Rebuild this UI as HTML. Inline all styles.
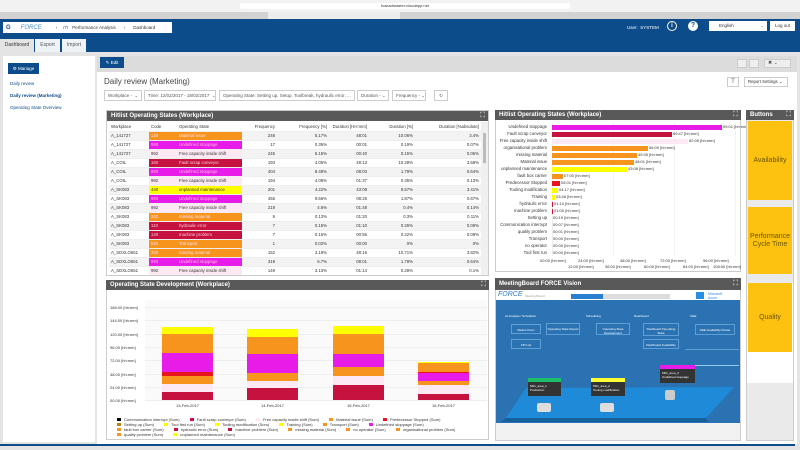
<!DOCTYPE html>
<html><head><meta charset="utf-8">
<style>
*{margin:0;padding:0;box-sizing:border-box}
body{width:800px;height:450px;overflow:hidden;background:#e4e4e4;font-family:"Liberation Sans",sans-serif;position:relative;font-size:5px;color:#333}
.a{position:absolute}
.ph{position:absolute;background:#595959;color:#fff;font-weight:bold;font-size:6px;line-height:10px;padding-left:4px}
.ph i{position:absolute;right:3px;top:0;font-style:normal;color:#bbb;font-size:7px}
.sel{position:absolute;top:90px;height:11px;border:1px solid #ccc;background:#fff;font-size:4.5px;line-height:9px;padding-left:3px;color:#555;white-space:nowrap;overflow:hidden}
table{border-collapse:collapse;font-size:4.3px}
td{height:9px;padding:0 2px;white-space:nowrap;border-bottom:1px solid #eee}
tr:nth-child(even) td{background:#f3f3f3}
.r{text-align:right}
.lab{position:absolute;font-size:4.3px;text-align:right;width:80px;left:467px}
.bar{position:absolute;height:5px;left:552px}
.bl{position:absolute;font-size:4px;color:#333;white-space:nowrap}
.yb{position:absolute;background:#fcc20f;color:#6b5200;font-size:7px;text-align:center;left:748px;width:44px;display:flex;align-items:center;justify-content:center;line-height:8px}
.lg{font-size:4px}
.mb{position:absolute;border:1px solid #5f9fd6;color:#fff;font-size:3px;text-align:center;padding-top:3px}
</style></head><body>
<div class="a" style="left:0;top:0;width:800px;height:12px;background:#f2f2f2"></div>
<div class="a" style="left:240px;top:3px;width:330px;height:6px;background:#fff;border-radius:2px;font-size:4px;text-align:center;color:#333;line-height:6px">fcacadmaster.cloudapp.net</div>
<div class="a" style="left:0;top:12px;width:800px;height:7px;background:#d2d2d2"></div>
<div class="a" style="left:268px;top:12px;width:132px;height:7px;background:#ececec"></div>
<div class="a" style="left:0;top:19px;width:800px;height:33px;background:#0d4c8b"></div>
<div class="a" style="left:3px;top:22px;width:169px;height:11px;background:#fff;font-size:4.5px;line-height:11px;color:#333;white-space:nowrap">
<span style="color:#0d4c8b;font-weight:bold;margin-left:3px;font-size:6px">G</span><span style="color:#4a8fd0;margin-left:10px;font-size:6px;font-style:italic">FORCE</span><span style="margin-left:14px">›</span><span style="margin-left:6px;color:#0d4c8b">/7\</span><span style="margin-left:4px">Performance Analysis</span><span style="margin-left:8px">›</span><span style="margin-left:8px">Dashboard</span></div>
<div class="a" style="left:0;top:39px;width:34px;height:13px;background:#e4e4e4;font-size:5px;line-height:13px;text-align:center">Dashboard</div>
<div class="a" style="left:35px;top:39px;width:25px;height:13px;background:#eef3f8;font-size:5px;line-height:13px;text-align:center;color:#555">Export</div>
<div class="a" style="left:62px;top:39px;width:24px;height:13px;background:#eef3f8;font-size:5px;line-height:13px;text-align:center;color:#555">Import</div>
<div class="a" style="left:627px;top:25px;color:#fff;font-size:4.5px">User: &nbsp;SYSTEM</div>
<div class="a" style="left:667px;top:21px;width:10px;height:10px;border:1px solid #fff;border-radius:50%;color:#fff;font-size:6px;text-align:center;line-height:8px;font-weight:bold">i</div>
<div class="a" style="left:688px;top:21px;width:10px;height:10px;background:#fff;border-radius:50%;color:#0d4c8b;font-size:7px;text-align:center;line-height:10px;font-weight:bold">?</div>
<div class="a" style="left:709px;top:21px;width:58px;height:10px;background:#fff;font-size:4.5px;line-height:10px;padding-left:10px">English<span style="float:right;margin-right:3px;color:#888">⌄</span></div>
<div class="a" style="left:770px;top:21px;width:25px;height:10px;background:#fff;font-size:4.5px;line-height:10px;text-align:center">Log out</div>
<div class="a" style="left:3px;top:56px;width:92px;height:386px;background:#fff"></div>
<div class="a" style="left:8px;top:63px;width:31px;height:11px;background:#0d4c8b;color:#fff;font-size:4.5px;line-height:11px;text-align:center">⚙ Manage</div>
<div class="a" style="left:10px;top:81px;font-size:4.5px;color:#0d4c8b">Daily review</div>
<div class="a" style="left:10px;top:93px;font-size:4.5px;color:#0d4c8b;font-weight:bold">Daily review (Marketing)</div>
<div class="a" style="left:10px;top:105px;font-size:4.5px;color:#0d4c8b">Operating State Overview</div>
<div class="a" style="left:97px;top:56px;width:700px;height:16px;background:#dcdcdc"></div>
<div class="a" style="left:100px;top:57px;width:24px;height:11px;background:#0d4c8b;color:#fff;font-size:4.5px;line-height:11px;text-align:center">✎ Edit</div>
<div class="a" style="left:737px;top:59px;width:10px;height:9px;background:#eee;border:1px solid #ccc"></div>
<div class="a" style="left:749px;top:59px;width:10px;height:9px;background:#eee;border:1px solid #ccc"></div>
<div class="a" style="left:764px;top:59px;width:27px;height:9px;background:#eee;border:1px solid #ccc;font-size:5px;line-height:7px;padding-left:3px;color:#555">✖ ⌄</div>
<div class="a" style="left:97px;top:72px;width:700px;height:372px;background:#fff"></div>
<div class="a" style="left:104px;top:77px;font-size:8px;color:#444">Daily review (Marketing)</div>
<div class="sel" style="left:104px;width:38px">Workplace - &nbsp;⌄</div>
<div class="sel" style="left:144px;width:72px">Time: 12/02/2017 - 18/02/2017 &nbsp;⌄</div>
<div class="sel" style="left:219px;width:136px">Operating State: Setting up, Setup, Toolbreak, hydraulic error, ... &nbsp;⌄</div>
<div class="sel" style="left:357px;width:32px">Duration - ⌄</div>
<div class="sel" style="left:392px;width:34px">Frequency - ⌄</div>
<div class="sel" style="left:434px;width:14px;text-align:center;padding:0">↻</div>
<div class="a" style="left:727px;top:77px;width:12px;height:10px;border:1px solid #ccc;font-size:6px;text-align:center;line-height:8px;color:#666">T</div>
<div class="a" style="left:744px;top:77px;width:44px;height:10px;border:1px solid #ccc;font-size:4.3px;line-height:8px;padding-left:3px;white-space:nowrap">Report Settings ⌄</div>

<div class="a" style="left:106px;top:110px;width:383px;height:166px;border:1px solid #ccc;background:#fff;overflow:hidden">
<div class="ph" style="left:0;top:0;width:381px">Hitlist Operating States (Workplace)<i>⛶</i></div>
<table class="a" style="left:2px;top:11px;width:372px">
<tr><td style="width:40px">Workplace</td><td style="width:28px">Code</td><td style="width:65px">Operating State</td><td class="r" style="width:35px">Frequency</td><td class="r" style="width:52px">Frequency [%]</td><td class="r" style="width:40px">Duration [HH:mm]</td><td class="r" style="width:46px">Duration [%]</td><td class="r">Duration [%absolute]</td></tr>
<tr><td>A_141727</td><td style="background:#f7941d;color:#fde">120</td><td style="background:#f7941d;color:#fde">Material issue</td><td class="r">246</td><td class="r">5.17%</td><td class="r">48:01</td><td class="r">10.06%</td><td class="r">3.4%</td></tr>
<tr><td>A_141727</td><td style="background:#e81ce8;color:#fbd">990</td><td style="background:#e81ce8;color:#fbd">Undefined stoppage</td><td class="r">17</td><td class="r">0.36%</td><td class="r">00:01</td><td class="r">0.19%</td><td class="r">0.07%</td></tr>
<tr><td>A_141727</td><td style="background:#fde9f3">992</td><td style="background:#fde9f3">Free capacity inside shift</td><td class="r">245</td><td class="r">5.15%</td><td class="r">00:40</td><td class="r">0.15%</td><td class="r">0.05%</td></tr>
<tr><td>A_COIL</td><td style="background:#c5123e;color:#fcd">160</td><td style="background:#c5123e;color:#fcd">Fault scrap conveyor</td><td class="r">193</td><td class="r">4.05%</td><td class="r">48:13</td><td class="r">10.28%</td><td class="r">3.68%</td></tr>
<tr><td>A_COIL</td><td style="background:#e81ce8;color:#fbd">990</td><td style="background:#e81ce8;color:#fbd">Undefined stoppage</td><td class="r">404</td><td class="r">8.49%</td><td class="r">08:03</td><td class="r">1.79%</td><td class="r">0.64%</td></tr>
<tr><td>A_COIL</td><td style="background:#fde9f3">992</td><td style="background:#fde9f3">Free capacity inside shift</td><td class="r">194</td><td class="r">4.08%</td><td class="r">01:37</td><td class="r">0.36%</td><td class="r">0.13%</td></tr>
<tr><td>A_SK083</td><td style="background:#ffff00">440</td><td style="background:#ffff00">unplanned maintenance</td><td class="r">201</td><td class="r">4.22%</td><td class="r">43:08</td><td class="r">9.57%</td><td class="r">3.41%</td></tr>
<tr><td>A_SK083</td><td style="background:#e81ce8;color:#fbd">990</td><td style="background:#e81ce8;color:#fbd">Undefined stoppage</td><td class="r">455</td><td class="r">9.56%</td><td class="r">08:25</td><td class="r">1.87%</td><td class="r">0.67%</td></tr>
<tr><td>A_SK083</td><td style="background:#fde9f3">992</td><td style="background:#fde9f3">Free capacity inside shift</td><td class="r">219</td><td class="r">4.6%</td><td class="r">01:48</td><td class="r">0.4%</td><td class="r">0.14%</td></tr>
<tr><td>A_SK083</td><td style="background:#f7941d;color:#fde">330</td><td style="background:#f7941d;color:#fde">missing material</td><td class="r">6</td><td class="r">0.13%</td><td class="r">01:20</td><td class="r">0.3%</td><td class="r">0.11%</td></tr>
<tr><td>A_SK083</td><td style="background:#c5123e;color:#fcd">110</td><td style="background:#c5123e;color:#fcd">hydraulic error</td><td class="r">7</td><td class="r">0.15%</td><td class="r">01:10</td><td class="r">0.26%</td><td class="r">0.09%</td></tr>
<tr><td>A_SK083</td><td style="background:#c5123e;color:#fcd">140</td><td style="background:#c5123e;color:#fcd">machine problem</td><td class="r">7</td><td class="r">0.15%</td><td class="r">00:56</td><td class="r">0.22%</td><td class="r">0.08%</td></tr>
<tr><td>A_SK083</td><td style="background:#f7941d;color:#fde">520</td><td style="background:#f7941d;color:#fde">Transport</td><td class="r">1</td><td class="r">0.02%</td><td class="r">00:00</td><td class="r">0%</td><td class="r">0%</td></tr>
<tr><td>A_SDXLO651</td><td style="background:#f7941d;color:#fde">330</td><td style="background:#f7941d;color:#fde">missing material</td><td class="r">152</td><td class="r">3.19%</td><td class="r">48:16</td><td class="r">10.71%</td><td class="r">3.82%</td></tr>
<tr><td>A_SDXLO651</td><td style="background:#e81ce8;color:#fbd">990</td><td style="background:#e81ce8;color:#fbd">Undefined stoppage</td><td class="r">319</td><td class="r">6.7%</td><td class="r">08:01</td><td class="r">1.78%</td><td class="r">0.64%</td></tr>
<tr><td>A_SDXLO651</td><td style="background:#fde9f3">992</td><td style="background:#fde9f3">Free capacity inside shift</td><td class="r">149</td><td class="r">3.13%</td><td class="r">01:14</td><td class="r">0.28%</td><td class="r">0.1%</td></tr>
<tr><td>A_ROCK</td><td style="background:#f7941d">120</td><td style="background:#f7941d">Material issue</td><td class="r">220</td><td class="r">4.62%</td><td class="r">48:00</td><td class="r">10.41%</td><td class="r">3.4%</td></tr>
</table>
<div class="a" style="left:374px;top:11px;width:7px;height:155px;background:#f0f0f0"></div>
<div class="a" style="left:376px;top:22px;width:3px;height:30px;background:#bbb"></div>
</div>

<div class="a" style="left:495px;top:110px;width:246px;height:162px;border:1px solid #ccc;background:#fff"></div>
<div class="ph" style="left:495px;top:110px;width:246px">Hitlist Operating States (Workplace)<i>⛶</i></div>
<div class="a" style="left:552px;top:122px;width:1px;height:134px;background:#eee"></div>
<div class="a" style="left:613px;top:122px;width:1px;height:134px;background:#f3f3f3"></div>
<div class="a" style="left:674px;top:122px;width:1px;height:134px;background:#f3f3f3"></div>
<div class="a" style="left:735px;top:122px;width:1px;height:134px;background:#f3f3f3"></div>
<div id="hb"></div>
<div class="bl" style="left:540px;top:258px">00:00 [hh:mm]</div>
<div class="bl" style="left:568px;top:264px">12:00 [hh:mm]</div>
<div class="bl" style="left:578px;top:258px">24:00 [hh:mm]</div>
<div class="bl" style="left:605px;top:264px">36:00 [hh:mm]</div>
<div class="bl" style="left:620px;top:258px">48:00 [hh:mm]</div>
<div class="bl" style="left:644px;top:264px">60:00 [hh:mm]</div>
<div class="bl" style="left:660px;top:258px">72:00 [hh:mm]</div>
<div class="bl" style="left:683px;top:264px">84:00 [hh:mm]</div>
<div class="bl" style="left:703px;top:258px">96:00 [hh:mm]</div>
<div class="bl" style="left:713px;top:264px">108:00 [hh:mm]</div>

<div class="a" style="left:746px;top:110px;width:48px;height:331px;border:1px solid #ccc;background:#eaeaea"></div>
<div class="a" style="left:747px;top:283px;width:46px;height:100px;background:#fff"></div>
<div class="ph" style="left:746px;top:110px;width:48px">Buttons<i>⛶</i></div>
<div class="yb" style="top:121px;height:79px">Availability</div>
<div class="yb" style="top:207px;height:67px">Performance<br>Cycle Time</div>
<div class="yb" style="top:283px;height:69px">Quality</div>

<div class="a" style="left:106px;top:280px;width:383px;height:160px;border:1px solid #ccc;background:#fff"></div>
<div class="ph" style="left:106px;top:280px;width:383px">Operating State Development (Workplace)<i>⛶</i></div>
<div class="a" style="left:145px;top:300px;width:342px;height:100px;background:#fafafa"></div>
<div id="ax"></div>
<div id="bars"></div>
<div class="bl" style="left:176px;top:403px">13-Feb-2017</div>
<div class="bl" style="left:261px;top:403px">14-Feb-2017</div>
<div class="bl" style="left:347px;top:403px">15-Feb-2017</div>
<div class="bl" style="left:432px;top:403px">16-Feb-2017</div>
<div class="a lg" style="left:117px;top:417px;width:370px;line-height:5px" id="leg"></div>

<div class="a" style="left:495px;top:278px;width:246px;height:163px;border:1px solid #ccc;background:#f2f2f2"></div>
<div class="ph" style="left:495px;top:278px;width:246px;height:12px;line-height:12px">MeetingBoard FORCE Vision<i>⛶</i></div>
<div class="a" style="left:496px;top:290px;width:244px;height:10px;background:#fff"></div>
<div class="a" style="left:498px;top:291px;font-size:7px;color:#2a78c0;font-style:italic">FORCE</div>
<div class="a" style="left:525px;top:294px;font-size:3px;color:#999">Meeting Board</div>
<div class="a" style="left:571px;top:294px;width:32px;height:5px;background:#2a7fd0"></div>
<div class="a" style="left:603px;top:294px;width:67px;height:5px;background:#ddd"></div>
<div class="a" style="left:696px;top:292px;width:8px;height:7px;background:#2a8ee0"></div>
<div class="a" style="left:708px;top:292px;font-size:3.5px;color:#2a8ee0">Microsoft<br>Azure</div>
<div class="a" style="left:496px;top:300px;width:244px;height:123px;background:#2b72b2"></div>
<div class="a" style="left:505px;top:314px;font-size:3px;color:#fff">AI Analysis / Simulation</div>
<div class="a" style="left:586px;top:314px;font-size:3px;color:#fff">Scheduling</div>
<div class="a" style="left:634px;top:314px;font-size:3px;color:#fff">Dashboard</div>
<div class="a" style="left:690px;top:314px;font-size:3px;color:#fff">OEE</div>
<div class="mb" style="left:511px;top:324px;width:30px;height:10px">Status Overv</div>
<div class="mb" style="left:546px;top:323px;width:34px;height:12px">Operating State Report</div>
<div class="mb" style="left:596px;top:323px;width:34px;height:12px">Operating State Development</div>
<div class="mb" style="left:643px;top:323px;width:36px;height:13px">Dashboard Operating State</div>
<div class="mb" style="left:695px;top:324px;width:40px;height:11px">OEE Availability Roster</div>
<div class="mb" style="left:511px;top:339px;width:30px;height:10px">KPI List</div>
<div class="mb" style="left:643px;top:339px;width:36px;height:10px">Dashboard Availability</div>
<div class="a" style="left:685px;top:349px;width:54px;height:1px;background:#5f9fd6"></div>
<div class="a" style="left:685px;top:365px;width:54px;height:1px;background:#9cc8ee"></div>
<svg class="a" style="left:496px;top:300px" width="244" height="123"><polygon points="30,88 238,87 210,118 10,118" fill="#1e8ad8"/><polygon points="10,118 210,118 212,122 5,122" fill="#16609e"/></svg>
<div class="a" style="left:528px;top:378px;width:33px;height:4px;background:#1fbf6a"></div>
<div class="a" style="left:528px;top:382px;width:33px;height:14px;background:#333;color:#fff;font-size:3px;padding:2px">M01_area_1<br>Production</div>
<div class="a" style="left:591px;top:378px;width:34px;height:4px;background:#ffff33"></div>
<div class="a" style="left:591px;top:382px;width:34px;height:14px;background:#333;color:#fff;font-size:3px;padding:2px">M01_area_2<br>Tooling modification</div>
<div class="a" style="left:660px;top:365px;width:35px;height:4px;background:#e81ce8"></div>
<div class="a" style="left:660px;top:369px;width:35px;height:14px;background:#333;color:#fff;font-size:3px;padding:2px">M01_area_3<br>Undefined stoppage</div>
<div class="a" style="left:537px;top:403px;width:14px;height:9px;background:#ddd;border-radius:2px"></div>
<div class="a" style="left:600px;top:403px;width:14px;height:9px;background:#ddd;border-radius:2px"></div>
<div class="a" style="left:665px;top:390px;width:10px;height:10px;background:#ccc;border-radius:2px"></div>
<div class="a" style="left:0;top:444px;width:795px;height:2px;background:#0d4c8b"></div>

<script>
var O='#f7941d',M='#e81ce8',C='#c5123e',P='#fde9f3',Y='#ffff00',R='#e8141e';
var hb=[["Undefined stoppage",722,M,"99:01 [hh:mm]"],["Fault scrap conveyor",672,C,"69:47 [hh:mm]"],["Free capacity inside shift",688,P,"82:05 [hh:mm]"],["organisational problem",648,O,"56:09 [hh:mm]"],["missing material",637,O,"49:35 [hh:mm]"],["Material issue",634,O,"48:01 [hh:mm]"],["unplanned maintenance",627,Y,"43:08 [hh:mm]"],["fault box carrier",563,O,"07:00 [hh:mm]"],["Predecessor Stopped",560,R,"05:01 [hh:mm]"],["Tooling modification",558,Y,"04:17 [hh:mm]"],["Training",555,Y,"03:46 [hh:mm]"],["hydraulic error",553,C,"01:10 [hh:mm]"],["machine problem",553,C,"01:00 [hh:mm]"],["Setting up",552,O,"00:19 [hh:mm]"],["Communication interrupt",552,'#000',"00:07 [hh:mm]"],["quality problem",552,O,"00:01 [hh:mm]"],["Transport",552,O,"00:00 [hh:mm]"],["no operator",552,O,"00:00 [hh:mm]"],["Tool first run",552,Y,"00:00 [hh:mm]"]];
var h='';hb.forEach(function(b,i){var y=124+i*7;h+='<div class="lab" style="top:'+y+'px">'+b[0]+'</div><div class="bar" style="top:'+(y+1)+'px;width:'+Math.max(0,b[1]-552)+'px;background:'+b[2]+'"></div><div class="bl" style="top:'+y+'px;left:'+(b[1]+1)+'px">'+b[3]+'</div>';});
document.getElementById('hb').innerHTML=h;
var ax='';["168.00","144.00","120.00","96.00","72.00","48.00","24.00","00.00"].forEach(function(l,i){var y=307+i*13.3;ax+='<div class="bl" style="left:110px;top:'+(y-2)+'px">'+l+' [hh:mm]</div><div class="a" style="left:145px;top:'+y+'px;width:342px;height:1px;background:#eee"></div>';});
document.getElementById('ax').innerHTML=ax;
var bars=[[162,[[392,400,C],[384,392,P],[376,384,O],[372,376,R],[353,372,M],[334,353,O],[327,334,Y]]],[247,[[388,400,C],[381,388,P],[373,381,O],[354,373,M],[337,354,O],[329,337,Y]]],[333,[[385,400,C],[376,385,P],[367,376,O],[354,367,M],[334,354,O],[326,334,Y]]],[418,[[394,400,C],[385,394,P],[381,385,O],[373,381,M],[372,373,R],[363,372,O],[362,363,Y]]]];
var b='';bars.forEach(function(g){g[1].forEach(function(s){b+='<div class="a" style="left:'+g[0]+'px;width:51px;top:'+s[0]+'px;height:'+(s[1]-s[0])+'px;background:'+s[2]+'"></div>';});});
document.getElementById('bars').innerHTML=b;
var lg=[['#000','Communication interrupt (Sum)'],[C,'Fault scrap conveyor (Sum)'],[P,'Free capacity inside shift (Sum)'],[O,'Material issue (Sum)'],[R,'Predecessor Stopped (Sum)'],['#b8860b','Setting up (Sum)'],[Y,'Tool first run (Sum)'],[Y,'Tooling modification (Sum)'],[Y,'Training (Sum)'],[O,'Transport (Sum)'],[M,'Undefined stoppage (Sum)'],[O,'fault box carrier (Sum)'],[C,'hydraulic error (Sum)'],[C,'machine problem (Sum)'],[O,'missing material (Sum)'],[O,'no operator (Sum)'],[O,'organisational problem (Sum)'],[O,'quality problem (Sum)'],[Y,'unplanned maintenance (Sum)']];
var l='';lg.forEach(function(x){l+='<span style="margin-right:9px;white-space:nowrap"><span style="display:inline-block;width:4px;height:3px;background:'+x[0]+';margin-right:3px"></span>'+x[1]+'</span> ';});
document.getElementById('leg').innerHTML=l;
</script>
</body></html>
